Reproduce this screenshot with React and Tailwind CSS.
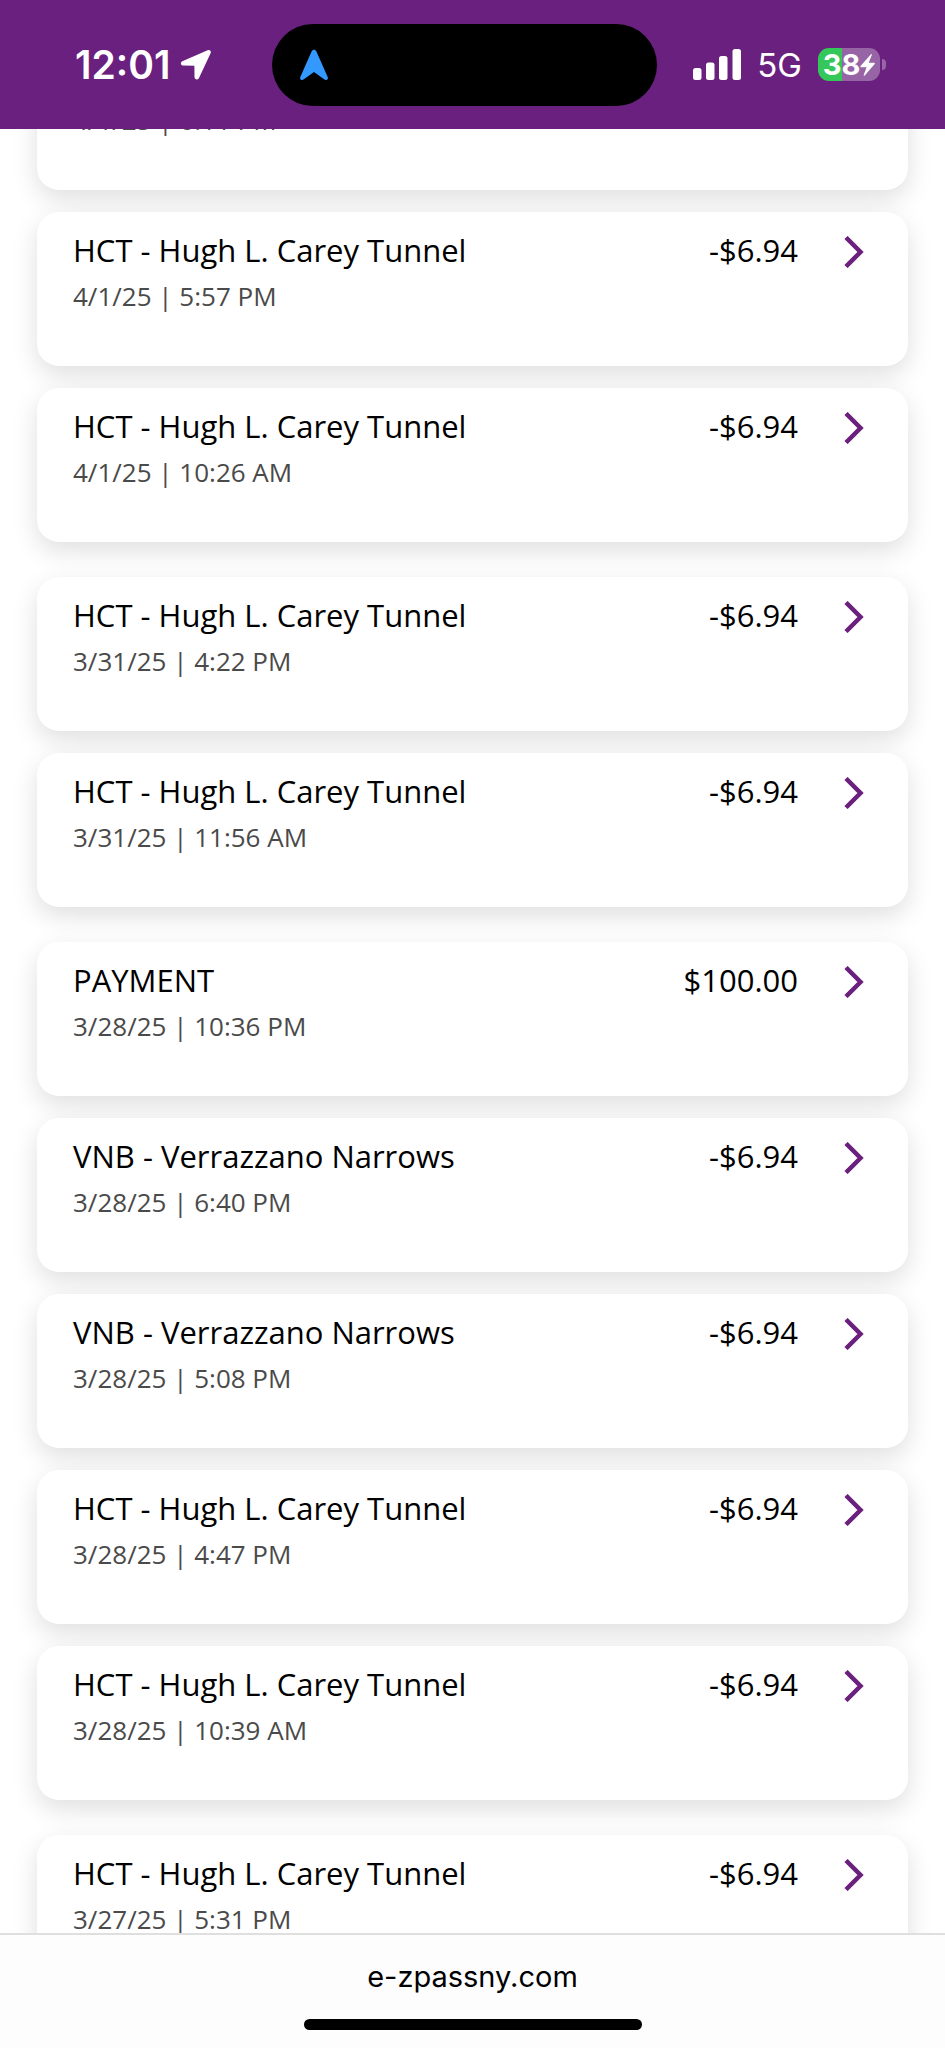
const groups = [
  [
    { name: "HCT - Hugh L. Carey Tunnel", when: "4/1/25 | 6:11 PM", amount: "-$6.94" },
    { name: "HCT - Hugh L. Carey Tunnel", when: "4/1/25 | 5:57 PM", amount: "-$6.94" },
    { name: "HCT - Hugh L. Carey Tunnel", when: "4/1/25 | 10:26 AM", amount: "-$6.94" },
  ],
  [
    { name: "HCT - Hugh L. Carey Tunnel", when: "3/31/25 | 4:22 PM", amount: "-$6.94" },
    { name: "HCT - Hugh L. Carey Tunnel", when: "3/31/25 | 11:56 AM", amount: "-$6.94" },
  ],
  [
    { name: "PAYMENT", when: "3/28/25 | 10:36 PM", amount: "$100.00" },
    { name: "VNB - Verrazzano Narrows", when: "3/28/25 | 6:40 PM", amount: "-$6.94" },
    { name: "VNB - Verrazzano Narrows", when: "3/28/25 | 5:08 PM", amount: "-$6.94" },
    { name: "HCT - Hugh L. Carey Tunnel", when: "3/28/25 | 4:47 PM", amount: "-$6.94" },
    { name: "HCT - Hugh L. Carey Tunnel", when: "3/28/25 | 10:39 AM", amount: "-$6.94" },
  ],
  [{ name: "HCT - Hugh L. Carey Tunnel", when: "3/27/25 | 5:31 PM", amount: "-$6.94" }],
];

export default function App() {
  return (
    <div className="flex h-screen flex-col overflow-hidden bg-white font-['Open_Sans',sans-serif]">
      <StatusBar />
      <main className="min-h-0 flex-1 overflow-hidden px-[37px]">
        {/* the list is scrolled part way into its first card */}
        <div className="-mt-[93px] flex flex-col gap-[35px]">
          {groups.map((items, index) => (
            <ul key={index} className="flex flex-col gap-[22px]">
              {items.map((item) => (
                <TransactionCard key={item.when} item={item} />
              ))}
            </ul>
          ))}
        </div>
      </main>
      <AddressBar />
    </div>
  );
}

function TransactionCard({ item }) {
  return (
    <li className="relative flex h-[154px] items-start rounded-[22px] bg-white pt-[18px] pr-[38px] pl-9 shadow-[0_9px_26px_rgba(0,0,0,0.13)]">
      <div className="min-w-0 flex-1">
        <p className="text-[31px] leading-10 text-black">{item.name}</p>
        <p className="mt-2 text-[26px] leading-9 text-[#4a4a4a]">{item.when}</p>
      </div>
      <p className="text-[31px] leading-10 text-black">{item.amount}</p>
      <button type="button" aria-label={`Details for ${item.when}`} className="ml-10 flex h-11 w-8 items-center justify-center">
        <svg viewBox="0 0 20 32" className="h-8 w-5" fill="none" stroke="#6b207d" strokeWidth="4.500">
          <path d="M2 1.500 16.500 16 2 30.500" />
        </svg>
      </button>
    </li>
  );
}

function StatusBar() {
  return (
    <header className="grid h-[129px] shrink-0 grid-cols-[272px_minmax(0,1fr)_288px] items-center bg-[#6a207e] font-[Inter,sans-serif] text-white">
      <div className="flex items-center gap-2.5 pl-[75px]">
        <time className="text-[39px] leading-[48px] font-semibold">12:01</time>
        <svg viewBox="0 0 32 32" className="h-8 w-8" fill="currentColor">
          <path d="M27.6 1.2 2.3 12.2C.1 13.3.6 16.5 3.2 16.6l11.2.1.1 11.4c.1 2.8 3.4 3.2 4.5.9L30.7 4.1c.9-2-1.1-3.8-3.1-2.9Z" />
        </svg>
      </div>
      <div className="flex h-[82px] items-center rounded-full bg-black pl-7">
        <svg viewBox="0 0 28 32" className="h-8 w-7" fill="#3399ff">
          <path d="M11.700 2.300c.9-2.200 3.700-2.200 4.600 0L27.700 28c.9 2.100-1.300 3.900-3.200 2.600L14 23 3.500 30.600C1.600 31.900-.6 30.100.3 28Z" />
        </svg>
      </div>
      <div className="flex items-center justify-end gap-4 pr-[59px]">
        <svg viewBox="0 0 48 31" className="h-[31px] w-12" fill="currentColor">
          <rect x="0" y="19" width="8.500" height="12" rx="2.500" />
          <rect x="13" y="13.500" width="8.500" height="17.500" rx="2.500" />
          <rect x="26" y="7" width="8.500" height="24" rx="2.500" />
          <rect x="39.500" y="0" width="8.500" height="31" rx="2.500" />
        </svg>
        <span className="text-[33px] leading-10">5G</span>
        <Battery />
      </div>
    </header>
  );
}

function Battery() {
  return (
    <div className="flex items-center gap-0.5">
      <div className="flex h-[33px] w-[62px] items-center justify-center rounded-[11px] bg-[linear-gradient(90deg,#34c759_24px,#9765a6_24px)]">
        <span className="text-[29px] leading-8 font-bold">38</span>
        <svg viewBox="0 0 15 22" className="h-[22px] w-[15px]" fill="currentColor">
          <path d="M10.800.4.5 12.100c-.4.5-.1 1.100.5 1.100h5.600L3.700 20.900c-.3.8.5 1.200 1 .6L14.700 9.900c.4-.5.1-1.100-.5-1.100H8.700L11.800 1c.3-.8-.5-1.200-1-.6Z" />
        </svg>
      </div>
      <span className="h-[11px] w-1 rounded-r-full bg-[#9765a6]" />
    </div>
  );
}

function AddressBar() {
  return (
    <footer className="z-10 flex h-[115px] shrink-0 flex-col items-center justify-between border-t-2 border-[#dfdfdf] bg-[#fdfdfd] pt-6 pb-[18px] font-[Inter,sans-serif]">
      <a href="#" className="text-[29px] leading-9 text-black">e-zpassny.com</a>
      <div className="h-[11px] w-[338px] rounded-full bg-black" />
    </footer>
  );
}
